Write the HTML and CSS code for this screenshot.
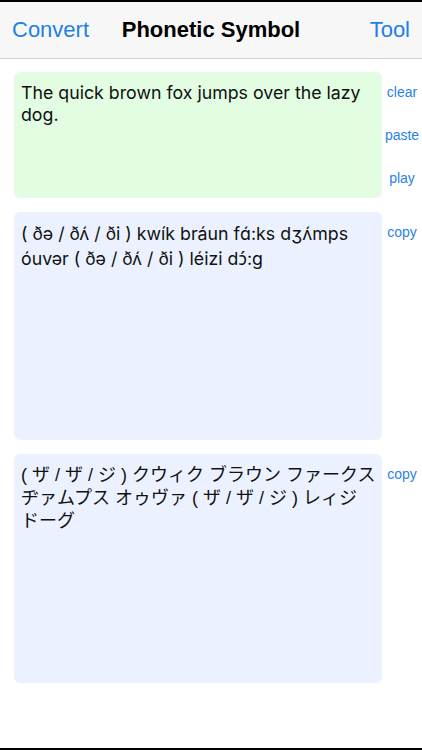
FILE: index.html
```html
<!DOCTYPE html>
<html lang="en">

<head>
  <meta charset="UTF-8">
  <meta name="viewport" content="width=device-width, initial-scale=1.0">
  <title>Phonetic Symbol</title>
  <link rel="stylesheet" href="styles.css">
</head>

<body>
  <div class="screen">
    <header class="navbar">
      <a href="#" class="nav-btn">Convert</a>
      <h1>Phonetic Symbol</h1>
      <a href="#" class="nav-btn nav-right">Tool</a>
    </header>

    <main class="content">
      <div class="row">
        <div class="box input-box">The quick brown fox jumps over the lazy dog.</div>
        <div class="side">
          <a href="#" class="side-btn">clear</a>
          <a href="#" class="side-btn">paste</a>
          <a href="#" class="side-btn">play</a>
        </div>
      </div>

      <div class="row">
        <div class="box output-box">( ðə / ðʌ́ / ði ) kwík bráun fɑ́:ks dʒʌ́mps óuvər ( ðə / ðʌ́ / ði ) léizi d<span class="ipa">ɔ́</span>:g</div>
        <div class="side">
          <a href="#" class="side-btn">copy</a>
        </div>
      </div>

      <div class="row">
        <div class="box output-box kana" lang="ja">( ザ / ザ / ジ ) クウィク ブラウン ファークス ヂァムプス オゥヴァ ( ザ / ザ / ジ ) レィジ ドーグ</div>
        <div class="side">
          <a href="#" class="side-btn">copy</a>
        </div>
      </div>
    </main>
  </div>
</body>

</html>
```

FILE: styles.css
```css
body {
  margin: 0;
  font-family: 'Liberation Sans', Arial, sans-serif;
  background-color: #fff;
  color: #111;
}

.screen {
  height: 746px;
  border-top: 2px solid #000;
  border-bottom: 2px solid #000;
  display: flex;
  flex-direction: column;
}

.navbar {
  height: 56px;
  background-color: #f7f7f7;
  border-bottom: 1px solid #d4d4d4;
  display: grid;
  grid-template-columns: 1fr auto 1fr;
  align-items: center;
  padding: 0 12px;
}

.navbar h1 {
  margin: 0;
  font-size: 22px;
  font-weight: bold;
  color: #000;
}

.nav-btn {
  color: #1f7fe8;
  text-decoration: none;
  font-size: 22px;
}

.nav-right {
  justify-self: end;
}

.content {
  padding-top: 13px;
  display: flex;
  flex-direction: column;
  gap: 14px;
}

.row {
  display: flex;
}

.box {
  margin-left: 14px;
  width: 368px;
  box-sizing: border-box;
  padding: 10px 4px 0 7px;
  border-radius: 6px;
  font-family: Inter, 'Liberation Sans', sans-serif;
  font-size: 17.75px;
  line-height: 22px;
}

.input-box {
  height: 126px;
  background-color: #e2fde2;
}

.output-box {
  height: 228px;
  line-height: 24px;
  background-color: #ebf1fe;
}

/* Inter has no open-o, keep the accent on the same glyph */
.ipa {
  font-family: 'Noto Sans', sans-serif;
}

.kana {
  font-family: 'Liberation Sans', 'Noto Sans CJK JP', sans-serif;
  font-size: 18px;
  height: 229px;
  line-height: 23px;
  word-break: keep-all;
}

.side {
  flex: 1;
  display: flex;
  flex-direction: column;
  align-items: center;
  padding-top: 12px;
  gap: 27px;
}

.side-btn {
  color: #2a82e6;
  text-decoration: none;
  font-size: 14px;
  line-height: 16px;
}
```
